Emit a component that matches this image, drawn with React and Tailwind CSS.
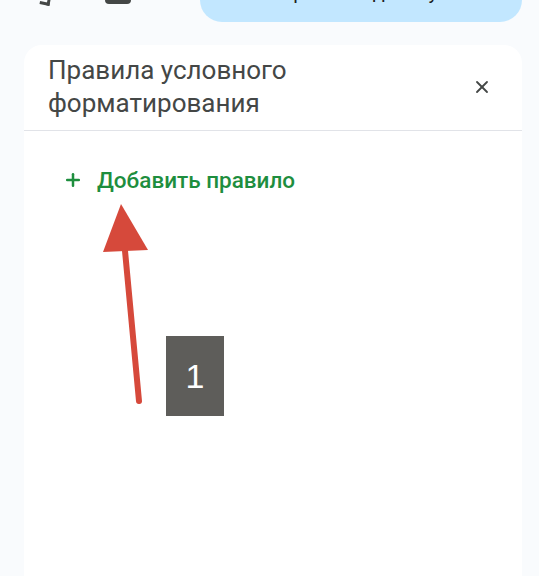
import { X, Plus } from "lucide-react";

const App = () => {
  return (
    <div
      className="relative w-[539px] h-[576px] overflow-hidden bg-[#f9fbfd]"
      style={{ fontFamily: "Roboto, 'Noto Sans', sans-serif" }}
    >
      {/* toolbar, cut off at the top */}
      <div className="flex items-end h-[22px]">
        <div className="ml-[40px] mb-[17px] w-[10px] h-[6px] border-r-[3px] border-b-[3px] border-[#444746] rotate-12" />
        <div className="ml-[55px] mb-[18px] w-[26px] h-[6px] rounded-b-[4px] bg-[#444746]" />
        <div className="ml-[69px] w-[322px] h-[40px] rounded-b-[22px] bg-[#c2e7ff] overflow-hidden relative">
          <span className="absolute left-[36px] top-0 text-[20px] leading-none text-[#1f1f1f] tracking-[3px] whitespace-nowrap">
            Настройки доступа
          </span>
        </div>
      </div>

      {/* side panel */}
      <div className="ml-[24px] w-[498px] mt-[23px] bg-white rounded-t-[18px] h-[560px]">
        <div className="flex items-center justify-between pl-[24px] pr-[30px] pt-[9px] pb-[10px] border-b border-[#e1e3e8]">
          <h2 className="text-[26px] leading-[33px] text-[#444746]">
            Правила условного
            <br />
            форматирования
          </h2>
          <X className="w-[20px] h-[20px] text-[#444746]" strokeWidth={2.2} />
        </div>

        <button className="flex items-center gap-[14px] ml-[39px] mt-[35px] text-[#1e8e3e]">
          <Plus className="w-[20px] h-[20px]" strokeWidth={3} />
          <span className="text-[22.5px] font-medium leading-[28px]">Добавить правило</span>
        </button>
      </div>

      {/* annotation arrow */}
      <svg className="absolute left-0 top-0 pointer-events-none" width="539" height="576">
        <line x1="139" y1="401" x2="124" y2="240" stroke="#d6493b" strokeWidth="6" strokeLinecap="round" />
        <polygon points="121,204 103,252 148,250" fill="#d6493b" />
      </svg>

      {/* annotation number */}
      <div className="absolute left-[166px] top-[336px] w-[58px] h-[80px] bg-[#5e5d5a] flex items-center justify-center">
        <span className="text-white text-[34px]" style={{ fontFamily: "'Liberation Sans', Arial, sans-serif" }}>
          1
        </span>
      </div>
    </div>
  );
};

export default App;
